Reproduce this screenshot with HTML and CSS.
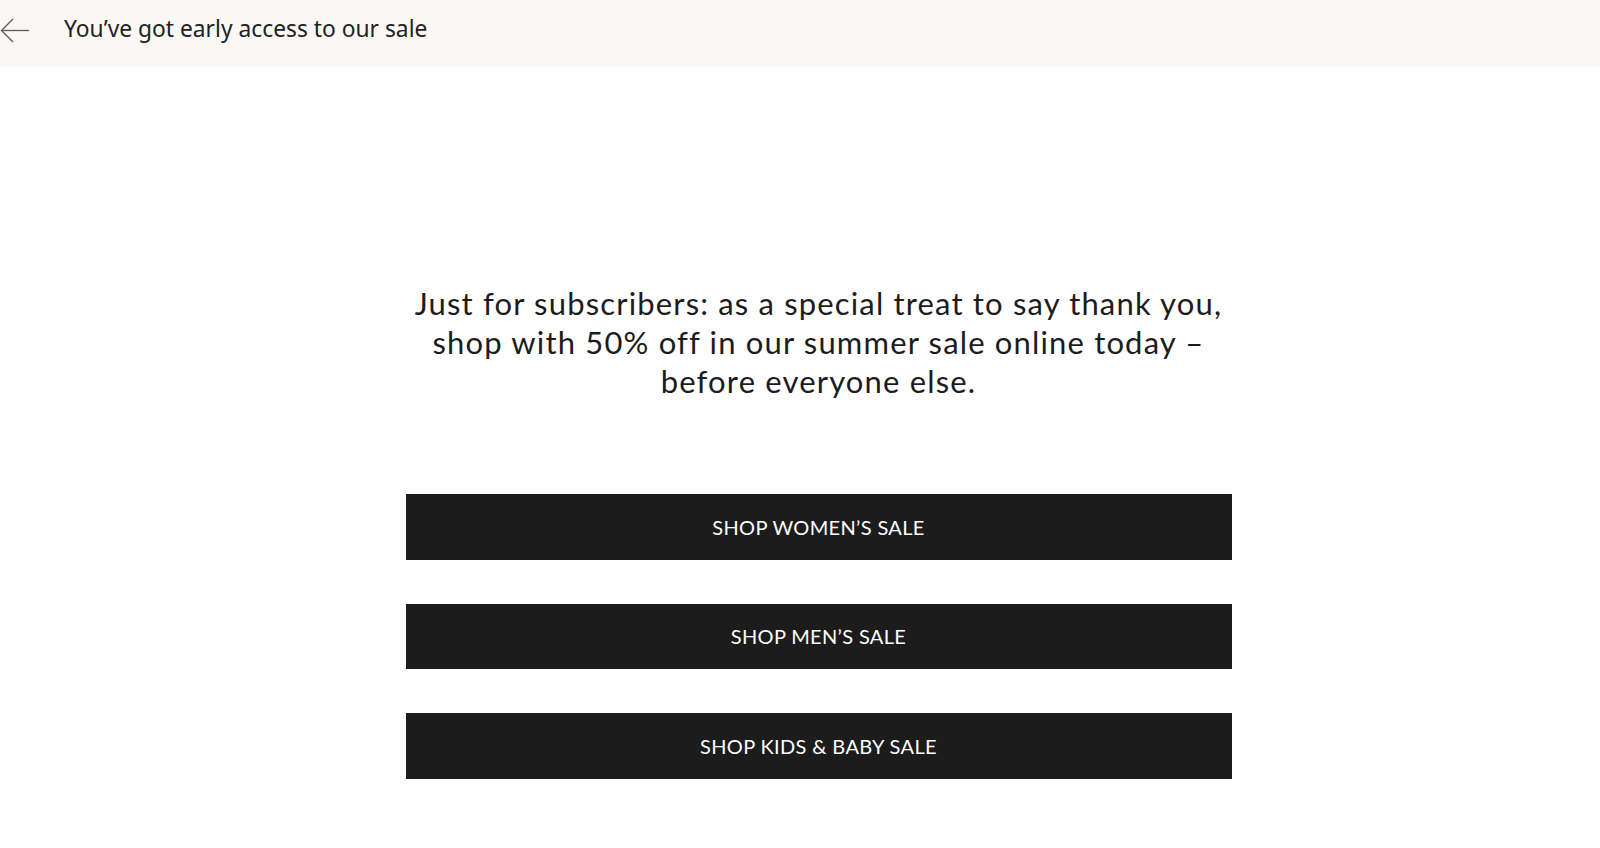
FILE: index.html
```html
<!DOCTYPE html>
<html lang="en">
<head>
    <meta charset="UTF-8">
    <meta name="viewport" content="width=device-width, initial-scale=1.0">
    <title>Early access</title>
    <link rel="stylesheet" href="styles.css">
</head>
<body>
    <header class="topbar">
        <a class="back" href="#">
            <svg width="30" height="26" viewBox="0 0 30 26" fill="none" stroke="#5a5a5a" stroke-width="1.3">
                <path d="M29 12.5H1.5"/>
                <path d="M13 1L1.5 12.5L13 24"/>
            </svg>
        </a>
        <h1 class="title">You’ve got early access to our sale</h1>
    </header>

    <main class="content">
        <p class="intro">Just for subscribers: as a special treat to say thank you, shop with 50% off in our summer sale online today – before everyone else.</p>

        <div class="actions">
            <a class="shop-button" href="#">Shop Women’s Sale</a>
            <a class="shop-button" href="#">Shop Men’s Sale</a>
            <a class="shop-button" href="#">Shop Kids &amp; Baby Sale</a>
        </div>
    </main>
</body>
</html>
```

FILE: styles.css
```css
body {
    margin: 0;
    background-color: #fefefe;
    font-family: Lato, "Noto Sans", sans-serif;
    color: #1c1c1c;
}

.topbar {
    display: flex;
    align-items: center;
    height: 67px;
    background-color: #f9f8f6;
}

.back {
    display: flex;
    width: 64px;
    margin-top: -6px;
}

.title {
    margin: 0;
    margin-top: -10px;
    font-family: "Noto Sans", sans-serif;
    font-size: 22.8px;
    font-weight: 400;
    color: #222;
}

.content {
    display: flex;
    flex-direction: column;
    align-items: center;
    padding-left: 37px;
}

.intro {
    width: 826px;
    margin: 217px 0 93px;
    font-size: 31px;
    line-height: 39px;
    letter-spacing: 1.16px;
    text-align: center;
}

.actions {
    display: flex;
    flex-direction: column;
    gap: 44px;
    width: 826px;
}

.shop-button {
    display: flex;
    justify-content: center;
    align-items: center;
    height: 65.5px;
    background-color: #1c1c1c;
    color: #fff;
    font-size: 20px;
    letter-spacing: 0.35px;
    text-transform: uppercase;
    text-decoration: none;
}
```
